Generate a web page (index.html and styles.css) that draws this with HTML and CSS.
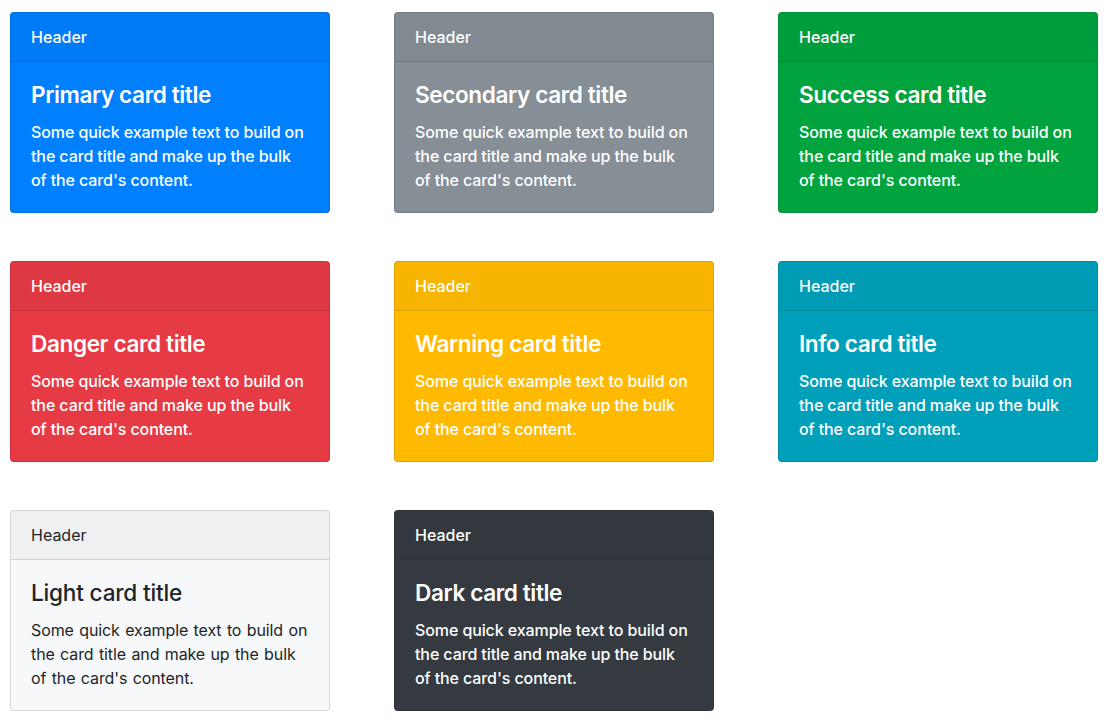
FILE: index.html
```html
<!DOCTYPE html>
<html>
<head>
<meta charset="utf-8">
<link rel="stylesheet" href="styles.css">
</head>
<body>
<div class="grid">
  <div class="card bg-primary">
    <div class="card-header">Header</div>
    <div class="card-body"><h5 class="card-title">Primary card title</h5><p class="card-text">Some quick example text to build on the card title and make up the bulk of the card's content.</p></div>
  </div>
  <div class="card bg-secondary">
    <div class="card-header">Header</div>
    <div class="card-body"><h5 class="card-title">Secondary card title</h5><p class="card-text">Some quick example text to build on the card title and make up the bulk of the card's content.</p></div>
  </div>
  <div class="card bg-success">
    <div class="card-header">Header</div>
    <div class="card-body"><h5 class="card-title">Success card title</h5><p class="card-text">Some quick example text to build on the card title and make up the bulk of the card's content.</p></div>
  </div>
  <div class="card bg-danger">
    <div class="card-header">Header</div>
    <div class="card-body"><h5 class="card-title">Danger card title</h5><p class="card-text">Some quick example text to build on the card title and make up the bulk of the card's content.</p></div>
  </div>
  <div class="card bg-warning">
    <div class="card-header">Header</div>
    <div class="card-body"><h5 class="card-title">Warning card title</h5><p class="card-text">Some quick example text to build on the card title and make up the bulk of the card's content.</p></div>
  </div>
  <div class="card bg-info">
    <div class="card-header">Header</div>
    <div class="card-body"><h5 class="card-title">Info card title</h5><p class="card-text">Some quick example text to build on the card title and make up the bulk of the card's content.</p></div>
  </div>
  <div class="card bg-light">
    <div class="card-header">Header</div>
    <div class="card-body"><h5 class="card-title">Light card title</h5><p class="card-text">Some quick example text to build on the card title and make up the bulk of the card's content.</p></div>
  </div>
  <div class="card bg-dark">
    <div class="card-header">Header</div>
    <div class="card-body"><h5 class="card-title">Dark card title</h5><p class="card-text">Some quick example text to build on the card title and make up the bulk of the card's content.</p></div>
  </div>
</div>
</body>
</html>
```
FILE: styles.css
```css
* { box-sizing: border-box; }
html, body { margin: 0; padding: 0; background: #fff; }
body {
  font-family: Inter, "Liberation Sans", sans-serif;
  font-size: 16px;
  line-height: 1.5;
  color: #212529;
}
.grid {
  display: grid;
  grid-template-columns: repeat(3, 320px);
  column-gap: 64px;
  row-gap: 48px;
  padding: 12px 10px;
}
.card {
  border: 1px solid rgba(0,0,0,.125);
  border-radius: 4px;
  color: #fff;
  overflow: hidden;
}
.card-header {
  padding: 12px 20px;
  line-height: 24px;
  background: rgba(0,0,0,.03);
  border-bottom: 1px solid rgba(0,0,0,.125);
  font-weight: 500;
}
.card-body { padding: 20px; }
.card-title {
  margin: 0 0 12px;
  font-size: 22.6px;
  font-weight: 600;
  line-height: 26px;
  letter-spacing: -0.4px;
}
.card-text {
  margin: 0;
  font-size: 16px;
  line-height: 24px;
  font-weight: 500;
  letter-spacing: -0.1px;
}
.bg-primary { background: #007fff; }
.bg-secondary { background: #868e96; }
.bg-success { background: #00a33e; }
.bg-danger { background: #e63a45; }
.bg-warning { background: #ffba00; }
.bg-info { background: #00a0ba; }
.bg-light { background: #f7f8f9; color: #212529; }
.bg-light .card-text, .bg-light .card-header { font-weight: 400; }
.bg-light .card-text { word-spacing: 1px; }
.bg-light .card-title { font-weight: 500; letter-spacing: -0.2px; }
.bg-dark { background: #343a40; }
```
